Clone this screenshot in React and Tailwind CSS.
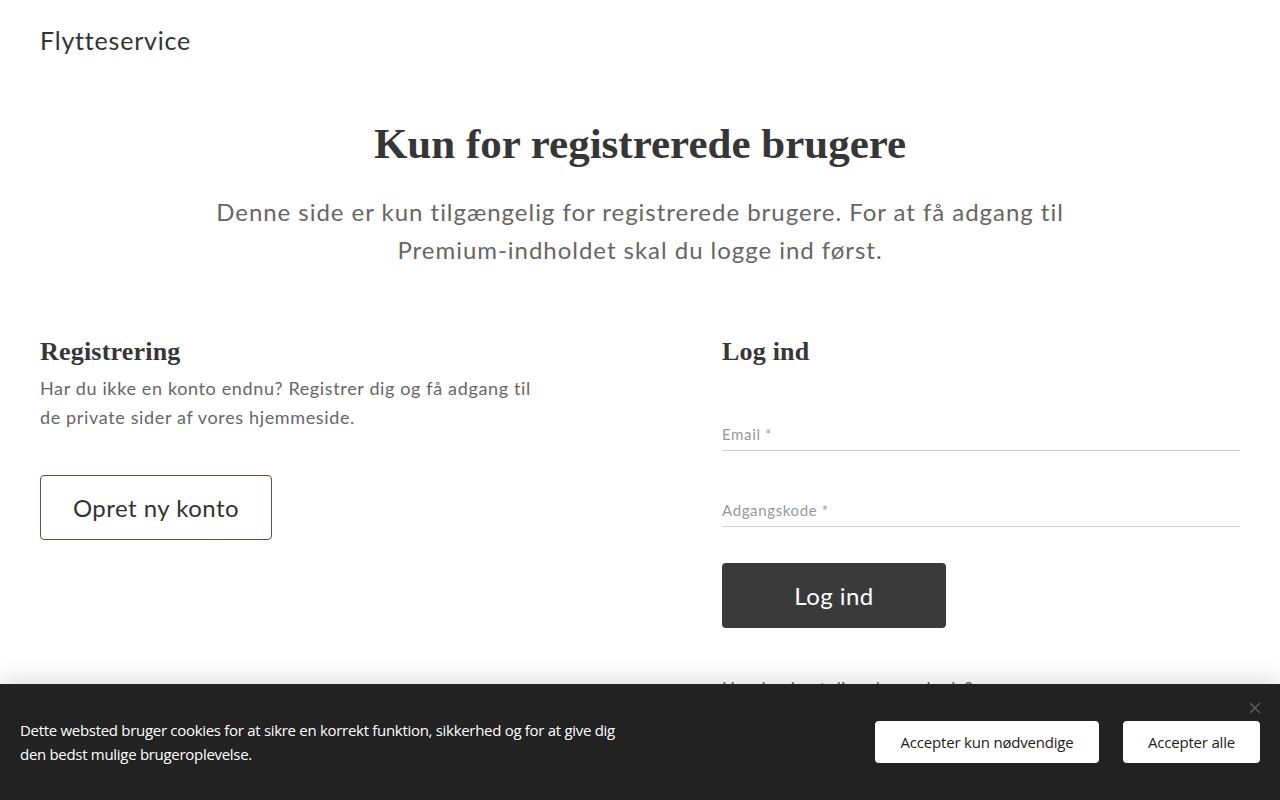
import React from "react";

export default function App() {
  const sans = { fontFamily: "Lato, 'Open Sans', sans-serif" };
  const serif = { fontFamily: "'Liberation Serif', serif" };
  return (
    <div className="relative min-h-[800px] bg-white text-[#333] tracking-[0.04em]" style={sans}>
      <header className="px-10 pt-[23px] h-[82px]">
        <div className="text-[25px] leading-[34px] text-[#333] tracking-[0.8px]">Flytteservice</div>
      </header>

      <section className="px-10 pt-[36px] text-center">
        <h1 className="text-[43px] leading-[52px] font-bold text-[#363636] tracking-normal" style={serif}>
          Kun for registrerede brugere
        </h1>
        <p className="mx-auto mt-[23px] max-w-[880px] text-[24px] leading-[38px] tracking-[0.97px] text-[#666]">
          Denne side er kun tilgængelig for registrerede brugere. For at få adgang til Premium-indholdet skal du logge ind først.
        </p>
      </section>

      <section className="px-10 pt-[66px] grid grid-cols-2 gap-[164px]">
        <div>
          <h2 className="text-[26px] leading-[34px] font-bold text-[#363636] tracking-[0.2px]" style={serif}>
            Registrering
          </h2>
          <p className="mt-[5px] max-w-[515px] text-[18px] leading-[29px] text-[#666]">
            Har du ikke en konto endnu? Registrer dig og få adgang til de private sider af vores hjemmeside.
          </p>
          <button className="mt-[43px] w-[232px] h-[65px] rounded-[4px] border border-[#6e4a40] bg-white text-[24px] tracking-[0.02em] text-[#333]">
            Opret ny konto
          </button>
        </div>
        <div>
          <h2 className="text-[26px] leading-[34px] font-bold text-[#363636] tracking-[0.2px]" style={serif}>
            Log ind
          </h2>
          <div className="mt-[53px] border-b border-[#d0d0d0] pb-[4px]">
            <span className="text-[15px] leading-[22px] text-[#999]">Email <span>*</span></span>
          </div>
          <div className="mt-[47px] border-b border-[#d0d0d0] pb-[4px]">
            <span className="text-[15px] leading-[22px] text-[#999]">Adgangskode <span>*</span></span>
          </div>
          <button className="mt-[36px] w-[224px] h-[65px] rounded-[4px] bg-[#3a3a3a] text-[24px] tracking-[0.02em] text-white">
            Log ind
          </button>
          <div className="mt-[49px] text-[17px] leading-[24px] text-[#666]">Har du glemt din adgangskode?</div>
        </div>
      </section>

      <div
        className="absolute left-0 right-0 top-[684px] h-[116px] bg-[#222] shadow-[0_-6px_20px_rgba(0,0,0,0.12)] flex items-center justify-between px-5 tracking-normal"
        style={{ fontFamily: "'Open Sans', sans-serif" }}
      >
        <p className="max-w-[622px] text-[15px] leading-[24px] tracking-[-0.3px] text-white">
          Dette websted bruger cookies for at sikre en korrekt funktion, sikkerhed og for at give dig den bedst mulige brugeroplevelse.
        </p>
        <div className="flex gap-6">
          <button className="h-[42px] w-[224px] rounded-[4px] bg-white text-[15px] tracking-[-0.2px] text-[#222]">Accepter kun nødvendige</button>
          <button className="h-[42px] w-[137px] rounded-[4px] bg-white text-[15px] tracking-[-0.2px] text-[#222]">Accepter alle</button>
        </div>
        <svg className="absolute right-[19px] top-[18px]" width="12" height="12" viewBox="0 0 12 12">
          <path d="M1 1L11 11M11 1L1 11" stroke="#5a5a5a" strokeWidth="1.6" />
        </svg>
      </div>
    </div>
  );
}
